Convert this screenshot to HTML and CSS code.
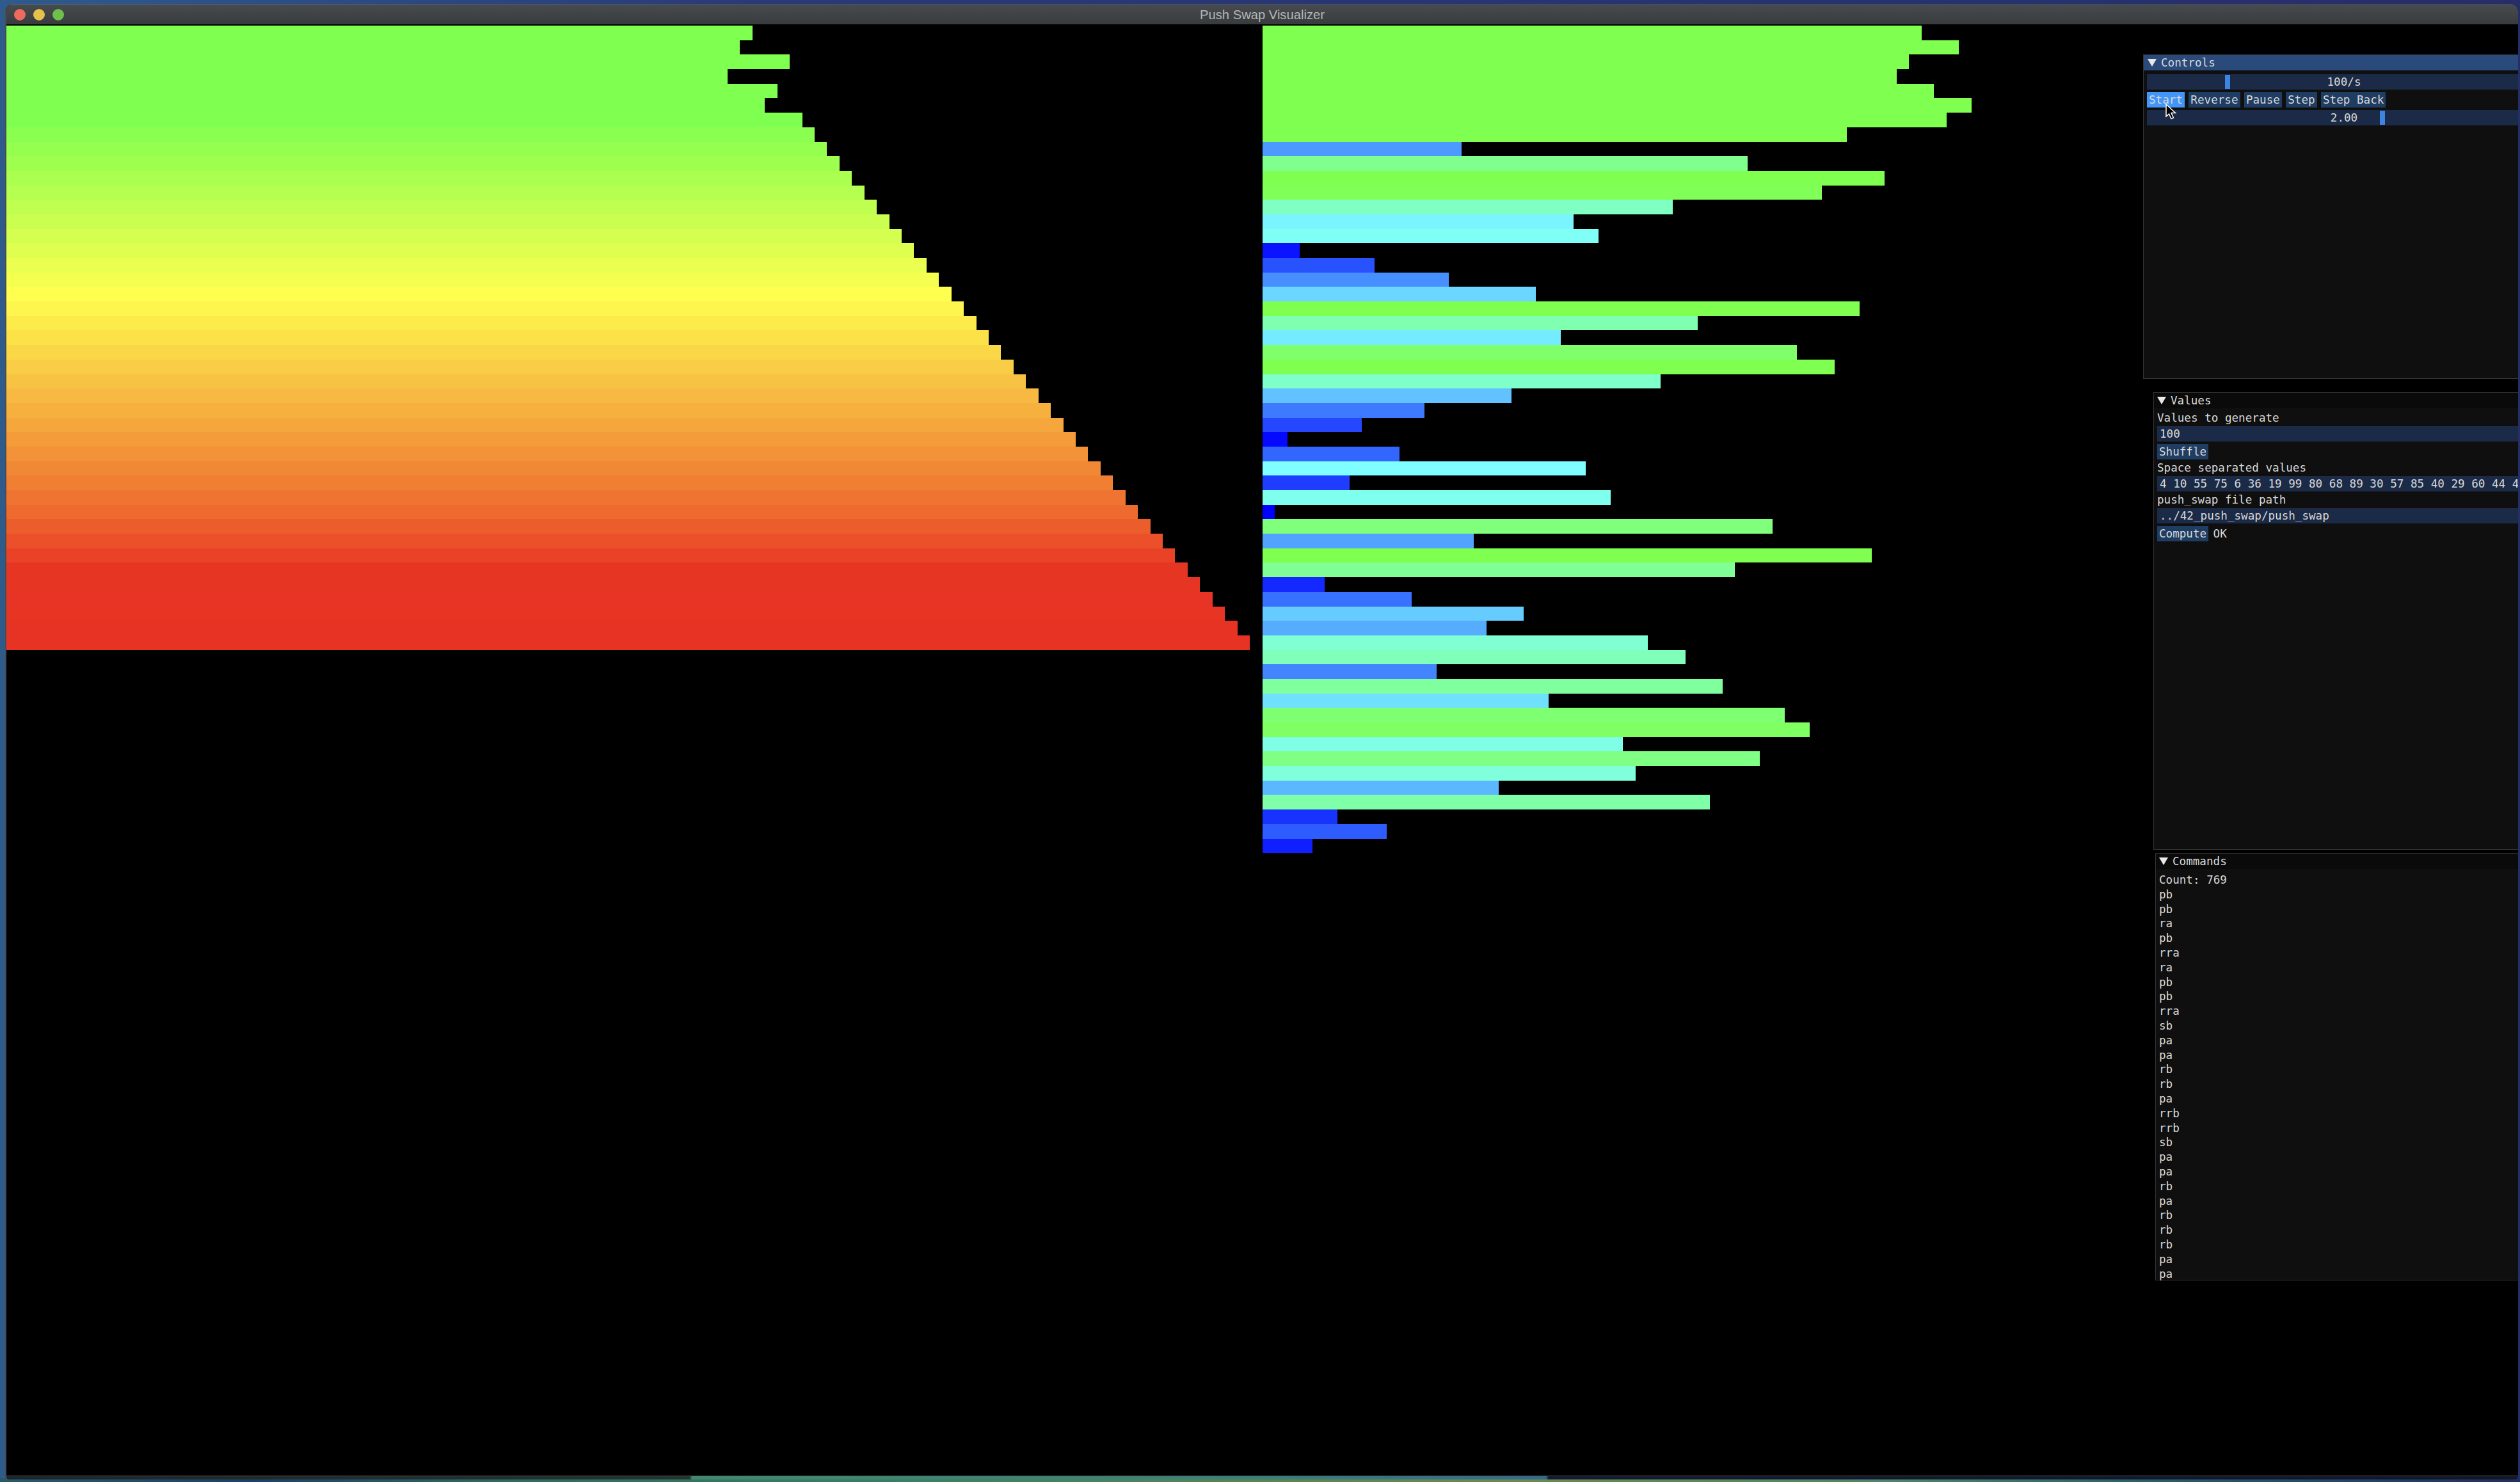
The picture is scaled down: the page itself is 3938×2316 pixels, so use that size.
FILE: index.html
```html
<!DOCTYPE html>
<html lang="en">
<head>
    <meta charset="UTF-8">
    <title>Push Swap Visualizer</title>
    <link rel="stylesheet" href="styles.css">
</head>
<body>
    <div class="window">
        <div class="titlebar">
            <div class="lights">
                <span class="light red"></span>
                <span class="light yellow"></span>
                <span class="light green"></span>
            </div>
            <div class="title">Push Swap Visualizer</div>
        </div>

        <div class="canvas">
            <div class="stack stack-a" id="stackA"></div>
            <div class="stack stack-b" id="stackB"></div>
        </div>
        <div class="window-foot"></div>

        <div class="panel panel-controls">
            <div class="panel-head active"><i class="arrow"></i>Controls</div>
            <div class="panel-body">
                <div class="frame slider"><span class="grab grab-rate"></span>100/s</div>
                <div class="row">
                    <span class="btn hover">Start</span>
                    <span class="btn">Reverse</span>
                    <span class="btn">Pause</span>
                    <span class="btn">Step</span>
                    <span class="btn">Step Back</span>
                </div>
                <div class="frame slider"><span class="grab grab-scale"></span>2.00</div>
            </div>
        </div>

        <div class="panel panel-values">
            <div class="panel-head"><i class="arrow"></i>Values</div>
            <div class="panel-body">
                <div class="label">Values to generate</div>
                <div class="frame input">100</div>
                <div class="row"><span class="btn">Shuffle</span></div>
                <div class="label">Space separated values</div>
                <div class="frame input">4 10 55 75 6 36 19 99 80 68 89 30 57 85 40 29 60 44 4</div>
                <div class="label">push_swap file path</div>
                <div class="frame input">../42_push_swap/push_swap</div>
                <div class="row"><span class="btn">Compute</span><span class="status">OK</span></div>
            </div>
        </div>

        <div class="panel panel-commands">
            <div class="panel-head"><i class="arrow"></i>Commands</div>
            <div class="command-list">
                <div>Count: 769</div>
                <div>pb</div>
                <div>pb</div>
                <div>ra</div>
                <div>pb</div>
                <div>rra</div>
                <div>ra</div>
                <div>pb</div>
                <div>pb</div>
                <div>rra</div>
                <div>sb</div>
                <div>pa</div>
                <div>pa</div>
                <div>rb</div>
                <div>rb</div>
                <div>pa</div>
                <div>rrb</div>
                <div>rrb</div>
                <div>sb</div>
                <div>pa</div>
                <div>pa</div>
                <div>rb</div>
                <div>pa</div>
                <div>rb</div>
                <div>rb</div>
                <div>rb</div>
                <div>pa</div>
                <div>pa</div>
            </div>
        </div>

        <svg class="cursor" width="18" height="25" viewBox="0 0 18 25">
            <path d="M1 1 L1 20 L5.5 16 L9 23.5 L12.5 22 L9 14.5 L15.5 14.5 Z" fill="#000" stroke="#fff" stroke-width="1.5"/>
        </svg>
    </div>
    <script src="app.js"></script>
</body>
</html>
```

FILE: styles.css
```css
body {
    margin: 0;
    width: 3938px;
    height: 2316px;
    overflow: hidden;
    box-sizing: border-box;
    padding: 7px 3px 4px 8px;
    background:
        linear-gradient(90deg, #2a5a6a, #1f3f68 10%, #2f6a64 20%, #3d7c60 35%, #6b8a50 60%, #4d8566 75%, #2a5f6a 85%, #20305e) bottom / 100% 6px no-repeat,
        linear-gradient(90deg, #2f5a8c, #2a3a75 30%, #262e68);
}

.window {
    position: relative;
    display: flex;
    flex-direction: column;
    height: 100%;
    overflow: hidden;
    background: #000;
    border-left: 2px solid #4a4d50;
    border-radius: 10px 10px 6px 6px;
}

.titlebar {
    display: grid;
    grid-template-columns: 1fr auto 1fr;
    align-items: center;
    flex: none;
    height: 32px;
    border-top: 1px solid #5e6164;
    box-sizing: border-box;
    background: linear-gradient(#484b4e, #393c3f);
    border-bottom: 1px solid #000;
    margin-bottom: 1px;
}

.lights { display: flex; gap: 12px; padding-left: 12px; }
.light { width: 18px; height: 18px; border-radius: 50%; }
.red { background: #ee6a5f; }
.yellow { background: #e5c04b; }
.green { background: #70bf4b; }

.title {
    font: 20.2px "Liberation Sans", Arial, sans-serif;
    color: #b2b6ba;
}

.canvas { flex: 1; display: flex; min-height: 0; }
.stack-a { width: 1963px; flex: none; }
.bar { height: 22.7px; }

.window-foot {
    flex: none;
    height: 6px;
    border-top: 1px solid #555;
    box-sizing: border-box;
    background: linear-gradient(90deg, #1c2629, #24352f 27.2%, #3f8a70 27.3%, #3c7f78 50%, #35688c 61.3%, #141a30 61.4%, #12162a);
}

/* imgui windows floating on the canvas */
.panel {
    position: absolute;
    width: 640px;
    box-sizing: border-box;
    background: #0f0f0f;
    border: 1px solid #333;
    font: 17.6px "DejaVu Sans Mono", monospace;
    color: #d8d8d8;
    white-space: nowrap;
}

.panel-controls { left: 3339px; top: 78px; width: 628px; height: 507px; }
.panel-values { left: 3355px; top: 606px; height: 715px; }
.panel-commands { left: 3358px; top: 1326px; height: 668px; }

.panel-head {
    display: flex;
    align-items: center;
    height: 24px;
    padding-left: 6px;
    background: #0a0a0a;
}

.panel-head.active { background: #294a7a; }

.panel-values .panel-head { padding-left: 5px; }
.panel-commands .panel-head { padding-left: 5px; }

.arrow {
    width: 0;
    height: 0;
    margin-right: 7px;
    border-left: 7px solid transparent;
    border-right: 7px solid transparent;
    border-top: 12px solid #e8e8e8;
}

.panel-body {
    display: flex;
    flex-direction: column;
    gap: 4px;
    padding: 6px 5px;
}

.frame {
    height: 24px;
    line-height: 24px;
    background: #1b2b47;
}

.input { padding-left: 4px; }

.slider { position: relative; text-align: center; }

.grab {
    position: absolute;
    top: 1px;
    bottom: 1px;
    width: 8px;
    background: #3d85e0;
}

.grab-rate { left: 122px; }
.grab-scale { left: 364px; }

.row { display: flex; gap: 6.4px; }

.btn {
    height: 24px;
    line-height: 24px;
    padding: 0 3px;
    background: #1f3d63;
}

.btn.hover { background: #4296fa; }

.status { line-height: 24px; margin-left: 1px; }

.label { height: 18px; line-height: 18px; }

.command-list { padding: 6px 0 0 5px; line-height: 22.8px; }

.cursor { position: absolute; left: 3374px; top: 155px; }
```

FILE: app.js
```js
// stack contents at this step of the sort
const stackA = [60, 59, 63, 58, 62, 61];
for (let v = 64; v <= 100; v++) stackA.push(v);

const stackB = [53, 56, 52, 51, 54, 57, 55, 47, 16, 39, 50, 45, 33, 25, 27, 3, 9, 15, 22, 48, 35, 24, 43, 46, 32, 20, 13, 8, 2,
    11, 26, 7, 28, 1, 41, 17, 49, 38, 5, 12, 21, 18, 31, 34, 14, 37, 23, 42, 44, 29, 40, 30, 19, 36, 6, 10, 4];

const UNIT = 19.43;

const stops = [
    [1, 0, 0, 255],
    [26, 127, 255, 255],
    [46, 127, 255, 79],
    [64, 127, 255, 79],
    [76, 255, 255, 80],
    [91, 238, 106, 47],
    [95, 231, 53, 36],
    [100, 231, 51, 35]
];

function colorFor(v) {
    let i = 0;
    while (i < stops.length - 2 && v > stops[i + 1][0]) i++;
    const a = stops[i], b = stops[i + 1];
    const t = Math.max(0, (v - a[0]) / (b[0] - a[0]));
    const c = [1, 2, 3].map(k => Math.round(a[k] + (b[k] - a[k]) * t));
    return `rgb(${c.join(',')})`;
}

function fill(id, values) {
    const el = document.getElementById(id);
    values.forEach(v => {
        const bar = document.createElement('div');
        bar.className = 'bar';
        bar.style.width = (v * UNIT) + 'px';
        bar.style.background = colorFor(v);
        el.appendChild(bar);
    });
}

fill('stackA', stackA);
fill('stackB', stackB);
```
